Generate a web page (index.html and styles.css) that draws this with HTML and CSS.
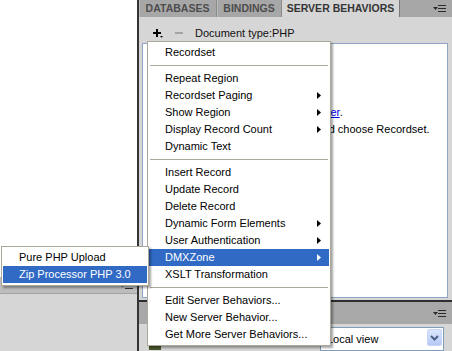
FILE: index.html
```html
<!DOCTYPE html>
<html>
<head>
<meta charset="utf-8">
<title>Server Behaviors</title>
<link rel="stylesheet" href="styles.css">
</head>
<body>
<div class="app">
  <div class="left">
    <div class="blank"></div>
    <div class="lhead">
      <svg class="pm" width="13" height="7" viewBox="0 0 13 7"><path d="M0 2h5L2.5 5z" fill="#2a2a2a"/><path d="M5 .5h8M5 3.5h8M5 6.5h8" stroke="#2a2a2a"/></svg>
    </div>
    <div class="lbody"></div>
  </div>
  <div class="vdiv"></div>
  <div class="right">
    <div class="tabs">
      <div class="tab t1">DATABASES</div>
      <div class="tab t2">BINDINGS</div>
      <div class="tab t3 active">SERVER BEHAVIORS</div>
      <div class="tabfill">
        <svg class="pm" width="13" height="7" viewBox="0 0 13 7"><path d="M0 2h5L2.5 5z" fill="#2a2a2a"/><path d="M5 .5h8M5 3.5h8M5 6.5h8" stroke="#2a2a2a"/></svg>
      </div>
    </div>
    <div class="sb">
      <div class="toolbar">
        <svg class="plus" width="10" height="9" viewBox="0 0 10 9"><path d="M0 3h8v2H0zM3 0h2v8H3z" fill="#000"/><path d="M7 7h3L8.5 8.7z" fill="#000"/></svg>
        <svg class="minus" width="8" height="2" viewBox="0 0 8 2"><rect width="8" height="2" fill="#a3a3a3"/></svg>
        <span class="doctype">Document type:PHP</span>
      </div>
      <div class="content">
        <div class="line intro">To use dynamic data on this page:</div>
        <div class="line step">1. Create a <a href="#">site</a> for this file.</div>
        <div class="line step">2. Choose a <a href="#">document type</a>.</div>
        <div class="line step">3. Set up the site's <a href="#">testing server</a>.</div>
        <div class="line step">4. Press the plus (+) button and choose Recordset.</div>
      </div>
    </div>
    <div class="hline"></div>
    <div class="fhead">
      <svg class="pm" width="13" height="7" viewBox="0 0 13 7"><path d="M0 2h5L2.5 5z" fill="#2a2a2a"/><path d="M5 .5h8M5 3.5h8M5 6.5h8" stroke="#2a2a2a"/></svg>
    </div>
    <div class="fbody">
      <div class="siteicon"></div>
      <div class="select">
        <span class="selval">Local view</span>
        <span class="selbtn"><svg width="9" height="6" viewBox="0 0 9 6"><path d="M1 1l3.5 3.5L8 1" fill="none" stroke="#4d6185" stroke-width="2"/></svg></span>
      </div>
    </div>
  </div>
</div>

<div class="menu mainmenu">
  <div class="item">Recordset</div>
  <div class="sep"></div>
  <div class="item">Repeat Region</div>
  <div class="item sub">Recordset Paging<svg class="arr" width="4" height="7" viewBox="0 0 4 7"><path d="M0 0l4 3.5L0 7z"/></svg></div>
  <div class="item sub">Show Region<svg class="arr" width="4" height="7" viewBox="0 0 4 7"><path d="M0 0l4 3.5L0 7z"/></svg></div>
  <div class="item sub">Display Record Count<svg class="arr" width="4" height="7" viewBox="0 0 4 7"><path d="M0 0l4 3.5L0 7z"/></svg></div>
  <div class="item">Dynamic Text</div>
  <div class="sep"></div>
  <div class="item">Insert Record</div>
  <div class="item">Update Record</div>
  <div class="item">Delete Record</div>
  <div class="item sub">Dynamic Form Elements<svg class="arr" width="4" height="7" viewBox="0 0 4 7"><path d="M0 0l4 3.5L0 7z"/></svg></div>
  <div class="item sub">User Authentication<svg class="arr" width="4" height="7" viewBox="0 0 4 7"><path d="M0 0l4 3.5L0 7z"/></svg></div>
  <div class="item sub hl">DMXZone<svg class="arr" width="4" height="7" viewBox="0 0 4 7"><path d="M0 0l4 3.5L0 7z"/></svg></div>
  <div class="item">XSLT Transformation</div>
  <div class="sep"></div>
  <div class="item">Edit Server Behaviors...</div>
  <div class="item">New Server Behavior...</div>
  <div class="item">Get More Server Behaviors...</div>
</div>

<div class="menu submenu">
  <div class="item">Pure PHP Upload</div>
  <div class="item hl">Zip Processor PHP 3.0</div>
</div>
</body>
</html>
```

FILE: styles.css
```css
* {
  box-sizing: border-box;
  margin: 0;
  padding: 0;
}

html,
body {
  width: 452px;
  height: 351px;
  overflow: hidden;
}

body {
  position: relative;
  font-family: "Liberation Sans", Arial, sans-serif;
  font-size: 11px;
  color: #000;
  background: #fff;
}

.app {
  display: flex;
  width: 452px;
  height: 351px;
}

/* left area */
.left {
  width: 137px;
  display: flex;
  flex-direction: column;
}

.blank {
  flex: 1;
  background: #fff;
}

.lhead {
  height: 16px;
  background: #bdbdbd;
  display: flex;
  justify-content: flex-end;
  align-items: center;
  padding-right: 4px;
}

.lbody {
  height: 58px;
  background: #d5d5d5;
  border-top: 1px solid #a3a3a3;
}

.vdiv {
  width: 2px;
  background: #343434;
}

/* right panel */
.right {
  flex: 1;
  display: flex;
  flex-direction: column;
}

.tabs {
  height: 17px;
  display: flex;
  background: #a7a7a7;
}

.tab {
  flex: none;
  display: flex;
  align-items: center;
  justify-content: center;
  font-weight: bold;
  font-size: 10.5px;
  color: #4d4d4d;
  border-right: 1px solid #8b8b8b;
  box-shadow: inset 1px 0 #bcbcbc;
}

.t1 { width: 78px; }
.t2 { width: 65px; }
.t3 { width: 118px; }

.tab.active {
  background: #d6d6d6;
  color: #353535;
  box-shadow: none;
  border-right-color: #7a7a7a;
}

.tabfill {
  flex: 1;
  display: flex;
  justify-content: flex-end;
  align-items: center;
  padding-right: 6px;
}

.sb {
  height: 286px;
  background: #d6d6d6;
  display: flex;
  flex-direction: column;
  padding: 0 4px 2px 3px;
}

.toolbar {
  height: 26px;
  display: flex;
  align-items: center;
  padding: 7px 0 0 11px;
}

.minus {
  margin-left: 12px;
}

.doctype {
  margin-left: 12px;
  color: #111;
}

.content {
  flex: 1;
  background: #fff;
  border: 1px solid #8ea5c8;
  padding: 11px 0 0 6px;
}

.line {
  height: 16.5px;
  line-height: 16.5px;
  white-space: nowrap;
}

.line.step {
  padding-left: 32px;
}

.line a {
  color: #0000ee;
  text-decoration: underline;
}

.hline {
  height: 2px;
  background: #2e2e2e;
}

.fhead {
  height: 22px;
  background: #a8a8a8;
  display: flex;
  justify-content: flex-end;
  align-items: center;
  padding-right: 6px;
}

.fbody {
  flex: 1;
  background: #d6d6d6;
  display: flex;
  padding: 3px 8px 0 10px;
}

.siteicon {
  width: 12px;
  height: 6px;
  margin-top: 17px;
  background: #4a5a2c;
  border-radius: 2px 2px 0 0;
}

.select {
  margin-left: auto;
  width: 124px;
  height: 24px;
  background: #fff;
  border: 1px solid #7f9db9;
  display: flex;
  align-items: flex-start;
  justify-content: space-between;
}

.selval {
  padding: 4px 0 0 6px;
  line-height: 14px;
}

.selbtn {
  width: 15px;
  height: 17px;
  margin: 1px 1px 0 0;
  border: 1px solid #c8d6fb;
  border-radius: 2px;
  background: linear-gradient(#dbe6fd, #b5c9f6);
  display: flex;
  align-items: center;
  justify-content: center;
}

/* popup menus */
.menu {
  position: absolute;
  background: #fff;
  border: 1px solid #aca899;
  padding: 2px 1px;
  box-shadow: 2px 2px 2px rgba(0, 0, 0, 0.35);
}

.mainmenu {
  left: 147px;
  top: 41px;
  width: 184px;
}

.submenu {
  left: 1px;
  top: 246px;
  width: 148px;
  z-index: 2;
}

.item {
  position: relative;
  height: 17px;
  line-height: 17px;
  padding-left: 16px;
  white-space: nowrap;
}

.item.hl {
  background: #316ac5;
  color: #fff;
}

.arr {
  position: absolute;
  right: 8px;
  top: 5px;
  fill: #000;
}

.item.hl .arr {
  fill: #fff;
}

.sep {
  height: 9px;
  padding: 4px 1px 0;
}

.sep::before {
  content: "";
  display: block;
  height: 1px;
  background: #aca899;
}
```
